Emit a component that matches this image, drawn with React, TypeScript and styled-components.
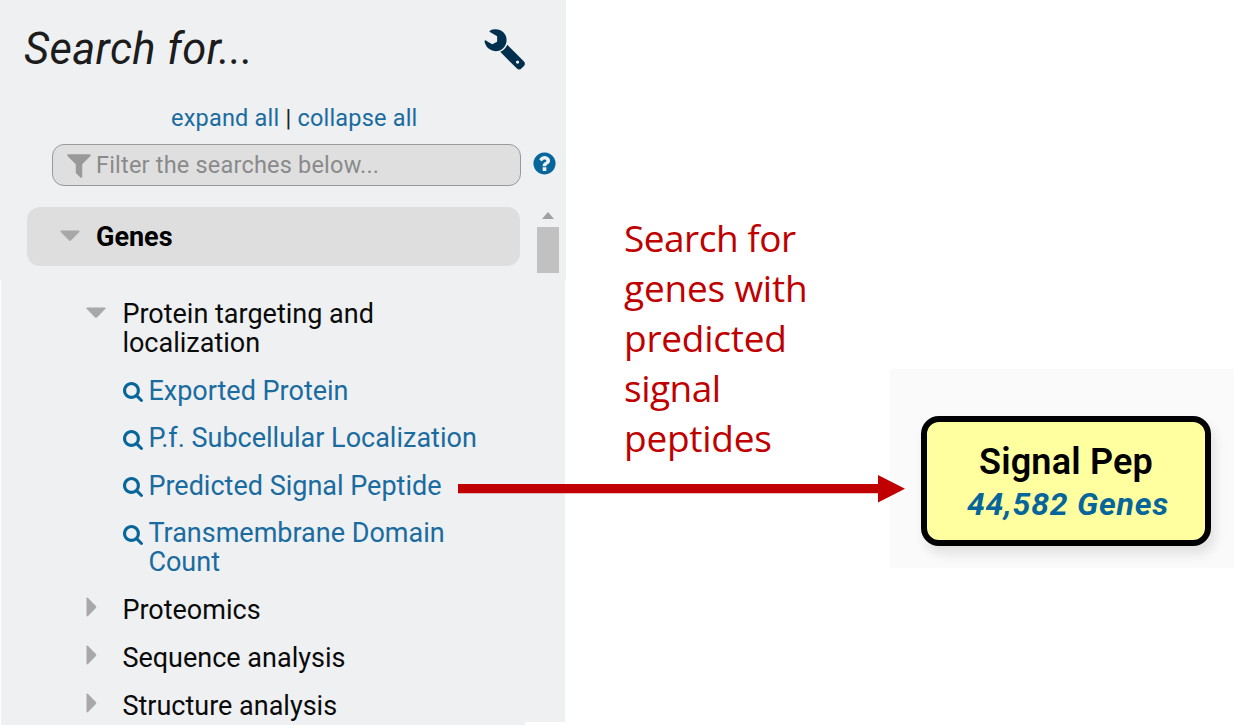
import React from "react";
import styled, { createGlobalStyle } from "styled-components";

const Global = createGlobalStyle`
  * { box-sizing: border-box; }
  body { margin: 0; background: #fff; overflow: hidden; font-family: Roboto, "Liberation Sans", sans-serif; }
`;

const Page = styled.main`
  position: relative;
  display: flex;
  width: 1234px;
  height: 725px;
  overflow: hidden;
`;

const Sidebar = styled.aside`
  display: flex;
  flex-direction: column;
  width: 566px;
  flex: none;
`;

const SidebarTop = styled.div`
  height: 280px;
  background: #eef0f2;
`;

const Header = styled.header`
  display: flex;
  justify-content: space-between;
  align-items: flex-start;
  height: 103px;
  padding: 25px 39px 0 24px;
`;

const Title = styled.h1`
  margin: 0;
  font-size: 43.5px;
  line-height: 50px;
  font-weight: 400;
  font-style: italic;
  letter-spacing: 0.4px;
  color: #1c1c1c;
`;

const WrenchIcon = styled.svg`
  width: 44px;
  height: 44px;
  margin-top: 1px;
  fill: #00304d;
  transform: scaleX(-1);
`;

const ToggleLinks = styled.div`
  height: 30px;
  padding-left: 171px;
  font-size: 23.5px;
  line-height: 30px;
  letter-spacing: 0.2px;
  white-space: pre;
  color: #222;
`;

const Link = styled.a`
  color: #1a6b9f;
`;

const FilterRow = styled.div`
  display: flex;
  align-items: center;
  gap: 12px;
  margin-top: 11px;
  padding-left: 52px;
`;

const FilterBox = styled.div`
  display: flex;
  align-items: center;
  width: 469px;
  height: 42px;
  padding-left: 11px;
  border: 1.5px solid #999;
  border-radius: 12px;
  background: #dfdfdf;
  font-size: 23.5px;
  letter-spacing: 0.2px;
  color: #8a8a8a;
`;

const FilterIcon = styled.svg`
  width: 30px;
  height: 30px;
  margin-right: 2px;
  fill: #999;
`;

const HelpIcon = styled.svg`
  width: 23px;
  height: 23px;
  margin-top: -3px;
  fill: #06659a;
`;

const CategoryRow = styled.div`
  display: flex;
  align-items: flex-start;
  gap: 17px;
  margin-top: 21px;
  padding-left: 27px;
`;

const Category = styled.div`
  display: flex;
  align-items: center;
  gap: 16px;
  width: 493px;
  height: 59px;
  padding-left: 33px;
  border-radius: 13px;
  background: #dedede;
  font-size: 27px;
  font-weight: 700;
  letter-spacing: 0;
  color: #000;
`;

const ScrollTrack = styled.div`
  display: flex;
  flex-direction: column;
  align-items: center;
  width: 22px;
`;

const ScrollUp = styled.div`
  width: 12px;
  height: 7px;
  margin: 5px 0 8px;
  background: #a0a0a0;
  clip-path: polygon(50% 0, 100% 100%, 0 100%);
`;

const ScrollThumb = styled.div`
  width: 22px;
  height: 46px;
  background: #c1c1c1;
`;

const TreePanel = styled.div`
  width: 564px;
  height: 442px;
  margin-left: 1px;
  padding: 20px 0 0 84px;
  background: #eef0f2;
`;

const TreeFoot = styled.div`
  width: 524px;
  height: 3px;
  margin-left: 1px;
  background: #eef0f2;
`;

const TreeRow = styled.div<{ $height: number }>`
  display: flex;
  align-items: flex-start;
  height: ${(p) => p.$height}px;
  font-size: 27px;
  line-height: 28.6px;
  color: #0a0a0a;
`;

const Caret = styled.svg<{ $open?: boolean }>`
  flex: none;
  width: ${(p) => (p.$open ? 20 : 12)}px;
  height: ${(p) => (p.$open ? 12 : 20)}px;
  margin-top: -1px;
  fill: #a8a8a8;
`;

const CaretCell = styled.span`
  display: flex;
  width: 37.4px;
  padding: 2px 0 0 1px;
  flex: none;
`;

const OpenCaretCell = styled(CaretCell)`
  padding: 8px 0 0 1px;
`;

const SearchRow = styled(TreeRow)`
  margin-left: 38px;
  color: #1a6b9f;
`;

const SearchIcon = styled.svg`
  flex: none;
  width: 20px;
  height: 20px;
  margin: 5.5px 5.4px 0 0;
  fill: #06659a;
`;

const Label = styled.span<{ $track?: number }>`
  white-space: pre-line;
  letter-spacing: ${(p) => p.$track ?? 0}px;
`;

const Note = styled.p`
  display: flex;
  flex-direction: column;
  width: 324px;
  margin: 0;
  padding: 213px 0 0 58px;
  font-family: "Open Sans", "Noto Sans", sans-serif;
  font-size: 37px;
  line-height: 50px;
  color: #c00000;
`;

const Strategy = styled.section`
  width: 344px;
  height: 199px;
  margin-top: 369px;
  padding: 47px 0 0 31px;
  background: #fafafa;
`;

const StepBox = styled.div`
  display: flex;
  flex-direction: column;
  align-items: center;
  width: 290px;
  height: 130px;
  padding-top: 18px;
  border: 6px solid #000;
  border-radius: 18px;
  background: #ffff9f;
  box-shadow: 4px 8px 12px rgba(0, 0, 0, 0.1);
`;

const StepName = styled.div`
  font-size: 36px;
  line-height: 44px;
  font-weight: 600;
  letter-spacing: 0.2px;
  color: #000;
`;

const StepCount = styled.div`
  padding-left: 4px;
  font-size: 32px;
  line-height: 40px;
  font-weight: 700;
  font-style: italic;
  letter-spacing: 0.8px;
  color: #06659a;
`;

const Arrow = styled.svg`
  position: absolute;
  left: 458px;
  top: 474px;
  fill: #c00000;
`;

const DownCaret = () => (
  <Caret $open viewBox="0 0 20 12">
    <path d="M1.2 .5h17.6q1.3.4.4 1.5l-8 8.2q-1.2 1.1-2.4 0L.8 2Q-.1.9 1.2.5z" />
  </Caret>
);

const RightCaret = () => (
  <Caret viewBox="0 0 12 20">
    <path d="M.5 1.2v17.6q.4 1.2 1.6.3l7.8-8q1-1.1 0-2.2l-7.8-8Q.8 0 .5 1.2z" />
  </Caret>
);

const searches = [
  { name: "Exported Protein", height: 47.5 },
  { name: "P.f. Subcellular Localization", height: 47.5 },
  { name: "Predicted Signal Peptide", height: 47.5 },
  { name: "Transmembrane Domain\nCount", height: 76.5 },
];

const groups = [
  { name: "Proteomics", height: 48.5 },
  { name: "Sequence analysis", height: 47.5 },
  { name: "Structure analysis", height: 30 },
];

const noteLines = [
  { text: "Search for", track: -0.5 },
  { text: "genes with", track: -0.2 },
  { text: "predicted", track: -0.25 },
  { text: "signal", track: -0.5 },
  { text: "peptides", track: -0.25 },
];

export default function App() {
  return (
    <Page>
      <Global />
      <Sidebar>
        <SidebarTop>
          <Header>
            <Title>Search for...</Title>
            <WrenchIcon viewBox="0 0 1792 1792">
              <path d="M448 1472q0-26-19-45t-45-19-45 19-19 45 19 45 45 19 45-19 19-45zm644-420l-682 682q-37 37-90 37-52 0-91-37l-106-108q-38-36-38-90 0-53 38-91l681-681q39 98 114.5 173.5t173.5 114.5zm634-435q0 39-23 106-47 134-164.5 217.5t-258.5 83.5q-185 0-316.5-131.5t-131.5-316.5 131.5-316.5 316.5-131.5q58 0 121.5 16.5t107.5 46.5q16 11 16 28t-16 28l-293 169v224l193 107q5-3 79-48.5t135.5-81 70.5-35.5q15 0 23.5 10t8.5 25z" />
            </WrenchIcon>
          </Header>
          <ToggleLinks>
            <Link>expand all</Link> | <Link>collapse all</Link>
          </ToggleLinks>
          <FilterRow>
            <FilterBox>
              <FilterIcon viewBox="0 0 1792 1792">
                <path d="M1595 295q17 41-14 70l-493 493v742q0 42-39 59-13 5-25 5-27 0-45-19l-256-256q-19-19-19-45v-486l-493-493q-31-29-14-70 17-39 59-39h1280q42 0 59 39z" />
              </FilterIcon>
              Filter the searches below...
            </FilterBox>
            <HelpIcon viewBox="100 100 1592 1592">
              <path d="M1024 1376v-192q0-14-9-23t-23-9h-192q-14 0-23 9t-9 23v192q0 14 9 23t23 9h192q14 0 23-9t9-23zm256-672q0-88-55.5-163t-138.5-116-170-41q-243 0-371 213-15 24 8 42l132 100q7 6 19 6 16 0 25-12 53-68 86-92 34-24 86-24 48 0 85.5 26t37.5 59q0 38-20 61t-68 45q-63 28-115.5 86.5t-52.5 125.5v36q0 14 9 23t23 9h192q14 0 23-9t9-23q0-19 21.5-49.5t54.5-49.5q32-18 49-28.5t46-35 44.5-48 28-60.5 12.5-81zm384 192q0 209-103 385.5t-279.5 279.5-385.5 103-385.5-103-279.5-279.5-103-385.5 103-385.5 279.5-279.5 385.5-103 385.5 103 279.5 279.5 103 385.5z" />
            </HelpIcon>
          </FilterRow>
          <CategoryRow>
            <Category>
              <DownCaret />
              Genes
            </Category>
            <ScrollTrack>
              <ScrollUp />
              <ScrollThumb />
            </ScrollTrack>
          </CategoryRow>
        </SidebarTop>
        <TreePanel>
          <TreeRow $height={76.5}>
            <OpenCaretCell>
              <DownCaret />
            </OpenCaretCell>
            <Label>{"Protein targeting and\nlocalization"}</Label>
          </TreeRow>
          {searches.map((s) => (
            <SearchRow key={s.name} $height={s.height}>
              <SearchIcon viewBox="64 128 1664 1664">
                <path d="M1216 832q0-185-131.5-316.5t-316.5-131.5-316.5 131.5-131.5 316.5 131.5 316.5 316.5 131.5 316.5-131.5 131.5-316.5zm512 832q0 52-38 90t-90 38q-54 0-90-38l-343-342q-179 124-399 124-143 0-273.5-55.5t-225-150-150-225-55.5-273.5 55.5-273.5 150-225 225-150 273.5-55.5 273.5 55.5 225 150 150 225 55.5 273.5q0 220-124 399l343 343q37 37 37 90z" />
              </SearchIcon>
              <Label>{s.name}</Label>
            </SearchRow>
          ))}
          {groups.map((g) => (
            <TreeRow key={g.name} $height={g.height}>
              <CaretCell>
                <RightCaret />
              </CaretCell>
              <Label>{g.name}</Label>
            </TreeRow>
          ))}
        </TreePanel>
        <TreeFoot />
      </Sidebar>
      <Note>
        {noteLines.map((l) => (
          <Label key={l.text} $track={l.track}>
            {l.text}
          </Label>
        ))}
      </Note>
      <Strategy>
        <StepBox>
          <StepName>Signal Pep</StepName>
          <StepCount>44,582 Genes</StepCount>
        </StepBox>
      </Strategy>
      <Arrow width="448" height="30" viewBox="0 0 448 30">
        <path d="M0 10h420V1l27 13.7-27 13.7v-9.2H0z" />
      </Arrow>
    </Page>
  );
}
